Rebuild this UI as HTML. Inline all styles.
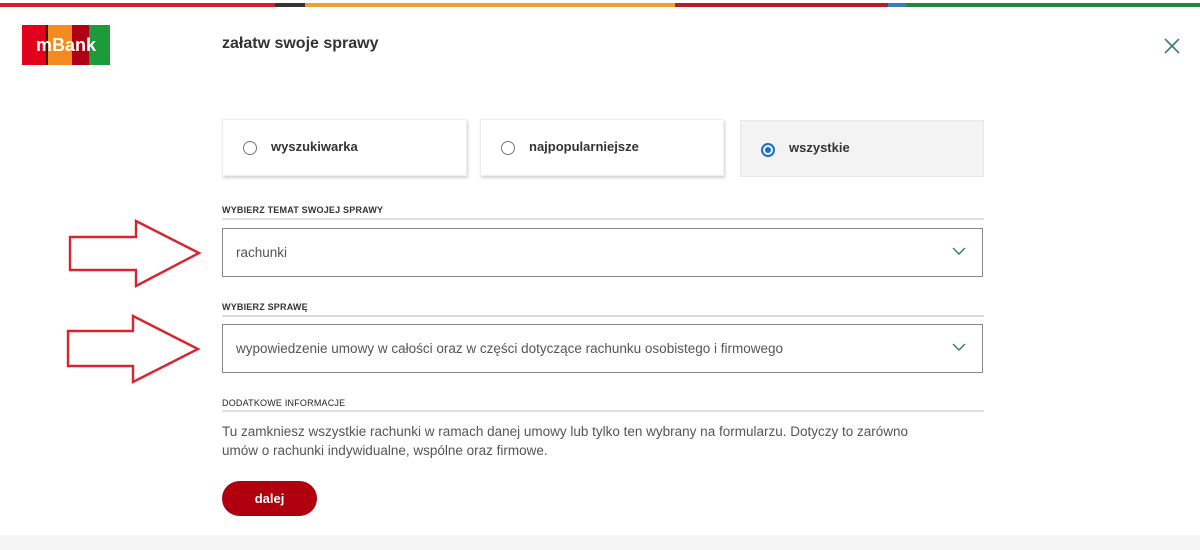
<!DOCTYPE html>
<html><head><meta charset="utf-8"><style>
*{margin:0;padding:0;box-sizing:border-box}
body{width:1200px;height:550px;overflow:hidden;background:#fff;font-family:"Liberation Sans",sans-serif;color:#333;position:relative}
.a{position:absolute}
.bar{top:3px;height:4px}
.card{position:absolute;top:119px;height:57px;background:#fff;box-shadow:1px 2px 3px rgba(0,0,0,.18);border:1px solid #eee;font-size:13px;font-weight:bold;color:#333}
.card .r{position:absolute;left:20px;top:21px;width:14px;height:14px;border:1px solid #777;border-radius:50%}
.card span{position:absolute;left:48px;top:19px}
.lbl{position:absolute;left:222px;font-size:9px;font-weight:bold;color:#333;letter-spacing:.2px}
.line{position:absolute;left:222px;width:762px;height:2px;background:#ddd}
.sel{position:absolute;left:222px;width:761px;height:49px;border:1px solid #888;font-size:13.5px;color:#555;padding-left:13px;line-height:47px}
.chev{position:absolute;right:16px;top:18px}
</style></head><body>
<div class="a bar" style="left:0;width:275px;background:#d4202a"></div>
<div class="a bar" style="left:275px;width:30px;background:#333"></div>
<div class="a bar" style="left:305px;width:370px;background:#f0a030"></div>
<div class="a bar" style="left:675px;width:213px;background:#b81c24"></div>
<div class="a bar" style="left:888px;width:18px;background:#3a7bc8"></div>
<div class="a bar" style="left:906px;width:294px;background:#1f8a3a"></div>

<div class="a" style="left:22px;top:25px;width:88px;height:40px;display:flex">
<div style="width:24px;background:#e3001b"></div><div style="width:2px;background:#3a1a10"></div><div style="width:24px;background:#f58a1f"></div><div style="width:17px;background:#b00016"></div><div style="width:21px;background:#1d9a3a"></div>
<div class="a" style="left:0;top:0;width:88px;height:40px;color:#fff;font-weight:bold;font-size:18px;line-height:40px;text-align:center;letter-spacing:0">mBank</div>
</div>
<div class="a" style="left:222px;top:35px;font-size:16px;font-weight:bold;color:#333">załatw swoje sprawy</div>
<svg class="a" style="left:1163px;top:37px" width="18" height="18"><path d="M2 2L16 16M16 2L2 16" stroke="#3d7c78" stroke-width="1.6"/></svg>

<div class="card" style="left:222px;width:245px"><div class="r"></div><span>wyszukiwarka</span></div>
<div class="card" style="left:480px;width:244px"><div class="r"></div><span>najpopularniejsze</span></div>
<div class="card" style="left:740px;width:244px;top:120px;background:#f3f3f3;box-shadow:none;border:1px solid #e8e8e8"><div class="r" style="border:2px solid #1a6fc4;top:22px"><div style="position:absolute;left:2px;top:2px;width:6px;height:6px;border-radius:50%;background:#1a6fc4"></div></div><span>wszystkie</span></div>

<div class="lbl" style="top:205px">WYBIERZ TEMAT SWOJEJ SPRAWY</div>
<div class="line" style="top:218px"></div>
<div class="sel" style="top:228px">rachunki<svg class="chev" width="14" height="9"><path d="M1 1L7 7L13 1" stroke="#3d7c78" stroke-width="1.5" fill="none"/></svg></div>

<div class="lbl" style="top:302px">WYBIERZ SPRAWĘ</div>
<div class="line" style="top:315px"></div>
<div class="sel" style="top:324px">wypowiedzenie umowy w całości oraz w części dotyczące rachunku osobistego i firmowego<svg class="chev" width="14" height="9"><path d="M1 1L7 7L13 1" stroke="#3d7c78" stroke-width="1.5" fill="none"/></svg></div>

<div class="lbl" style="top:398px;font-weight:normal;color:#222">DODATKOWE INFORMACJE</div>
<div class="line" style="top:410px"></div>
<div class="a" style="left:222px;top:422px;width:712px;font-size:13.5px;line-height:19px;color:#555">Tu zamkniesz wszystkie rachunki w ramach danej umowy lub tylko ten wybrany na formularzu. Dotyczy to zarówno umów o rachunki indywidualne, wspólne oraz firmowe.</div>

<div class="a" style="left:222px;top:481px;width:95px;height:35px;border-radius:18px;background:#b0000f;color:#fff;font-weight:bold;font-size:13px;text-align:center;line-height:35px">dalej</div>
<div class="a" style="left:0;top:535px;width:1200px;height:15px;background:#f5f5f5"></div>

<svg class="a" style="left:0;top:0" width="220" height="400">
<path d="M70 237H136V221L199 253L136 286V270H70Z" fill="none" stroke="#d8242c" stroke-width="2.4"/>
<path d="M68 331H133V316L198 349L133 382V366H68Z" fill="none" stroke="#d8242c" stroke-width="2.4"/>
</svg>
</body></html>
